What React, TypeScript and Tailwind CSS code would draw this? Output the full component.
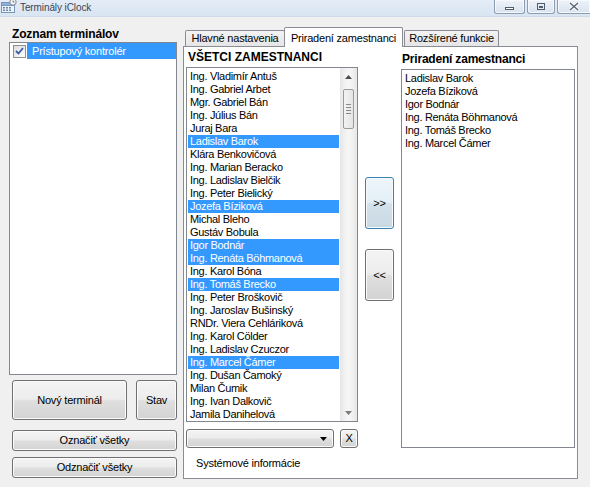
import React from "react";

const all: [string, boolean][] = [
  ["Ing. Vladimír Antuš", false],
  ["Ing. Gabriel Arbet", false],
  ["Mgr. Gabriel Bán", false],
  ["Ing. Július Bán", false],
  ["Juraj Bara", false],
  ["Ladislav Barok", true],
  ["Klára Benkovičová", false],
  ["Ing. Marian Beracko", false],
  ["Ing. Ladislav Bielčik", false],
  ["Ing. Peter Bielický", false],
  ["Jozefa Bíziková", true],
  ["Michal Bleho", false],
  ["Gustáv Bobula", false],
  ["Igor Bodnár", true],
  ["Ing. Renáta Böhmanová", true],
  ["Ing. Karol Bóna", false],
  ["Ing. Tomáš Brecko", true],
  ["Ing. Peter Broškovič", false],
  ["Ing. Jaroslav Bušinský", false],
  ["RNDr. Viera Cehláriková", false],
  ["Ing. Karol Cölder", false],
  ["Ing. Ladislav Czuczor", false],
  ["Ing. Marcel Čámer", true],
  ["Ing. Dušan Čamoký", false],
  ["Milan Čumik", false],
  ["Ing. Ivan Dalkovič", false],
  ["Jamila Danihelová", false],
];

const assigned = [
  "Ladislav Barok",
  "Jozefa Bíziková",
  "Igor Bodnár",
  "Ing. Renáta Böhmanová",
  "Ing. Tomáš Brecko",
  "Ing. Marcel Čámer",
];

const btn =
  "border border-[#707070] rounded-[3px] bg-[linear-gradient(#f4f4f4_0%,#ececec_48%,#dfdfdf_52%,#d3d3d3_100%)] shadow-[inset_0_0_0_1px_#fbfbfb] flex items-center justify-center text-[11px] text-black";

function TitleBar() {
  return (
    <div className="h-[17px] flex items-start bg-[linear-gradient(#e4edf7,#d9e5f2)] border-b border-[#cfdbe9]">
      <svg width="16" height="13" viewBox="0 0 16 13" className="ml-[1px] mt-0">
        <rect x="0.5" y="2.5" width="13" height="10" fill="#eaf2fb" stroke="#7d95b4" />
        <rect x="0.5" y="2.5" width="13" height="3" fill="#8fb2dc" stroke="#7d95b4" />
        <g fill="#6f88a8">
          <rect x="2" y="7" width="2" height="1.5" />
          <rect x="5" y="7" width="2" height="1.5" />
          <rect x="8" y="7" width="2" height="1.5" />
          <rect x="2" y="9.5" width="2" height="1.5" />
          <rect x="5" y="9.5" width="2" height="1.5" />
          <rect x="8" y="9.5" width="2" height="1.5" />
        </g>
        <circle cx="12" cy="2" r="3.2" fill="#f4f6f8" stroke="#7b8797" />
        <path d="M12 0.5 V2 H13.4" stroke="#555" strokeWidth="0.8" fill="none" />
      </svg>
      <span className="ml-[3px] mt-[2px] text-[10px] leading-[12px] tracking-[-0.1px] text-[#3b4654]">
        Terminály iClock
      </span>
      <div className="ml-auto flex gap-[2px] mr-0">
        <div className="w-[31px] h-[14px] border border-t-0 border-[#8c9db3] rounded-b-[3px] bg-[linear-gradient(#eef3f9,#d8e2ee)] shadow-[inset_0_0_0_1px_#f6f9fc] flex items-center justify-center">
          <div className="w-[9px] h-[3px] mt-[4px] border border-[#525d6b] bg-white" />
        </div>
        <div className="w-[28px] h-[14px] border border-t-0 border-[#8c9db3] rounded-b-[3px] bg-[linear-gradient(#eef3f9,#d8e2ee)] shadow-[inset_0_0_0_1px_#f6f9fc] flex items-center justify-center">
          <div className="w-[8px] h-[7px] border border-[#525d6b] flex items-center justify-center">
            <div className="w-[4px] h-[2px] border border-[#525d6b]" />
          </div>
        </div>
        <div className="w-[33px] h-[14px] border border-t-0 border-r-0 border-[#8c9db3] rounded-bl-[3px] bg-[linear-gradient(#eef3f9,#d8e2ee)] shadow-[inset_0_0_0_1px_#f6f9fc] flex items-center justify-center">
          <svg width="12" height="9" viewBox="0 0 12 9">
            <path d="M2 1 L10 8 M10 1 L2 8" stroke="#ffffff" strokeWidth="3" />
            <path d="M2 1 L10 8 M10 1 L2 8" stroke="#58636f" strokeWidth="1.4" />
          </svg>
        </div>
      </div>
    </div>
  );
}

function Scrollbar() {
  return (
    <div className="w-[17px] h-full bg-[linear-gradient(90deg,#e6e6e6,#f5f5f5_40%,#f5f5f5_60%,#e6e6e6)] flex flex-col items-center">
      <div className="h-[17px] w-full flex items-center justify-center">
        <svg width="7" height="4" viewBox="0 0 7 4">
          <path d="M0 4 L3.5 0 L7 4 Z" fill="#4d4d4d" />
        </svg>
      </div>
      <div className="w-[11px] h-[40px] mt-[4px] border border-[#9a9a9a] rounded-[2px] bg-[linear-gradient(90deg,#f3f3f3,#e4e4e4)] flex flex-col items-center justify-center gap-[2px]">
        <div className="w-[5px] h-px bg-[#8a8a8a]" />
        <div className="w-[5px] h-px bg-[#8a8a8a]" />
        <div className="w-[5px] h-px bg-[#8a8a8a]" />
        <div className="w-[5px] h-px bg-[#8a8a8a]" />
      </div>
      <div className="flex-1" />
      <div className="h-[17px] w-full flex items-center justify-center">
        <svg width="7" height="4" viewBox="0 0 7 4">
          <path d="M0 0 L3.5 4 L7 0 Z" fill="#7a7a7a" />
        </svg>
      </div>
    </div>
  );
}

export default function App() {
  return (
    <div className="w-[590px] h-[487px] bg-[#f0f0f0] flex flex-col overflow-hidden font-['Liberation_Sans',Arial,sans-serif] text-[11px] text-black tracking-[-0.2px]">
      <TitleBar />
      <div className="flex">
        {/* left column */}
        <div className="w-[177px] pl-[9px] flex flex-col">
          <div className="mt-[9px] h-[16px] pl-[3px] flex items-center font-bold text-[12px] tracking-[-0.15px]">
            Zoznam terminálov
          </div>
          <div className="h-[333px] border border-[#828790] bg-white pt-0">
            <div className="flex items-center h-[16px]">
              <div className="ml-[3px] w-[13px] h-[13px] border border-[#8e8f8f] bg-[linear-gradient(135deg,#dcdcdc,#ffffff)] flex items-center justify-center">
                <svg width="9" height="8" viewBox="0 0 9 8">
                  <path d="M1 4 L3.5 6.5 L8 1" stroke="#3b5aa8" strokeWidth="1.8" fill="none" />
                </svg>
              </div>
              <div className="ml-px flex-1 h-[16px] bg-[#3399ff] text-white pl-[5px] flex items-center text-[11px]">
                Prístupový kontrolér
              </div>
            </div>
          </div>
          <div className="mt-[5px] pl-[3px] flex gap-[9px] h-[40px]">
            <div className={`${btn} w-[115px] h-[40px]`}>Nový terminál</div>
            <div className={`${btn} w-[41px] h-[40px]`}>Stav</div>
          </div>
          <div className={`${btn} mt-[10px] ml-[3px] w-[165px] h-[21px]`}>Označiť všetky</div>
          <div className={`${btn} mt-[6px] ml-[3px] w-[165px] h-[21px]`}>Odznačiť všetky</div>
        </div>

        {/* tab control */}
        <div className="ml-[6px] w-[395px] flex flex-col">
          <div className="h-[29px] flex items-end pl-[2px] relative z-10">
            <div className="w-[100px] h-[16px] border border-b-0 border-[#898c95] rounded-t-[2px] bg-[linear-gradient(#f3f3f3,#e5e5e5)] flex items-center justify-center text-[11px] mb-0">
              Hlavné nastavenia
            </div>
            <div className="w-[119px] h-[20px] -mb-px border border-b-0 border-[#898c95] rounded-t-[2px] bg-white flex items-start pt-[2px] justify-center text-[11px] -ml-px">
              Priradení zamestnanci
            </div>
            <div className="w-[95px] h-[16px] border border-b-0 border-[#898c95] rounded-t-[2px] bg-[linear-gradient(#f3f3f3,#e5e5e5)] flex items-center justify-center text-[11px] ml-[1px]">
              Rozšírené funkcie
            </div>
          </div>
          <div className="h-[433px] border border-[#898c95] bg-white flex">
            {/* all employees */}
            <div className="ml-[2px] w-[172px] flex flex-col">
              <div className="h-[20px] pl-[2px] flex items-center font-bold text-[12px] tracking-[0px]">
                VŠETCI ZAMESTNANCI
              </div>
              <div className="h-[355px] border border-[#828790] bg-white flex overflow-hidden">
                <div className="flex-1 pt-[2px] px-px overflow-hidden">
                  {all.map(([name, sel]) => (
                    <div
                      key={name}
                      className={`h-[13px] leading-[13px] pl-[2px] whitespace-nowrap tracking-[-0.3px] ${
                        sel ? "bg-[#3399ff] text-white" : ""
                      }`}
                    >
                      {name}
                    </div>
                  ))}
                </div>
                <Scrollbar />
              </div>
              <div className="mt-[7px] h-[19px] flex">
                <div className="w-[148px] h-[19px] border border-[#707070] rounded-[3px] bg-[linear-gradient(#f4f4f4_0%,#ececec_48%,#dfdfdf_52%,#d3d3d3_100%)] shadow-[inset_0_0_0_1px_#fbfbfb] flex items-center justify-end pr-[6px]">
                  <svg width="7" height="4" viewBox="0 0 7 4">
                    <path d="M0 0 L3.5 4 L7 0 Z" fill="#000" />
                  </svg>
                </div>
                <div className={`${btn} ml-[6px] w-[18px] h-[19px]`}>X</div>
              </div>
              <div className="mt-[8px] h-[14px] pl-[10px] flex items-center">Systémové informácie</div>
            </div>

            {/* move buttons */}
            <div className="ml-[7px] w-[29px] flex flex-col">
              <div className="mt-[130px] h-[52px] w-[29px] border border-[#3c7fb1] rounded-[3px] bg-[linear-gradient(#eef6fb_0%,#e3eff7_48%,#d3e1ea_52%,#c9d9e3_100%)] shadow-[inset_0_0_0_1px_#f4fafd] flex items-center justify-center text-[11px]">
                &gt;&gt;
              </div>
              <div className={`${btn} mt-[20px] h-[52px] w-[29px]`}>&lt;&lt;</div>
            </div>

            {/* assigned */}
            <div className="ml-[7px] w-[174px] flex flex-col">
              <div className="h-[22px] pl-[1px] pt-[2px] flex items-center font-bold text-[12px] tracking-[-0.2px]">
                Priradení zamestnanci
              </div>
              <div className="h-[379px] border border-[#828790] bg-white pt-[2px] pl-[3px]">
                {assigned.map((n) => (
                  <div key={n} className="h-[13px] leading-[13px] whitespace-nowrap tracking-[-0.3px]">
                    {n}
                  </div>
                ))}
              </div>
            </div>
          </div>
        </div>
      </div>
    </div>
  );
}
